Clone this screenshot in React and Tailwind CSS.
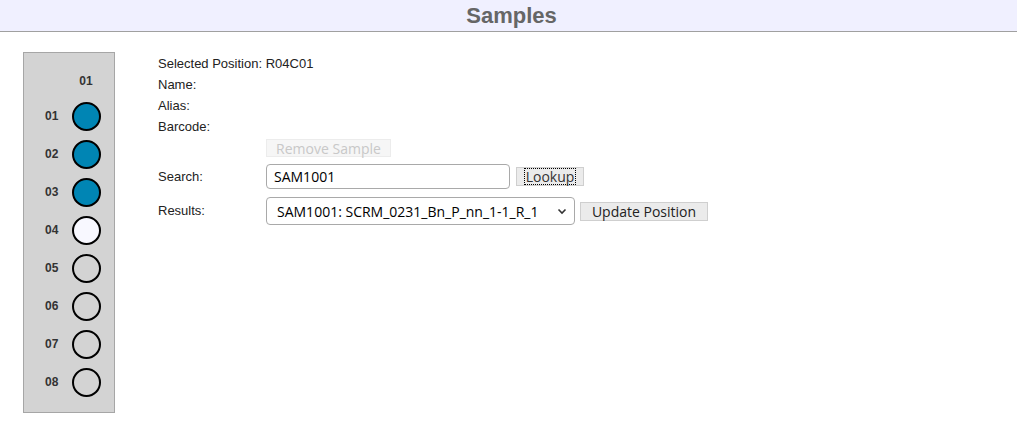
import React from 'react';

const wells = [
  { id: '01', state: 'filled' },
  { id: '02', state: 'filled' },
  { id: '03', state: 'filled' },
  { id: '04', state: 'selected' },
  { id: '05', state: 'empty' },
  { id: '06', state: 'empty' },
  { id: '07', state: 'empty' },
  { id: '08', state: 'empty' },
];

const wellColor = {
  filled: 'bg-[#0085b4]',
  selected: 'bg-[#f8f8ff]',
  empty: 'bg-transparent',
};

function Plate() {
  return (
    <div className="ml-[23px] mt-[20px] w-[92px] h-[361px] shrink-0 border border-[#a6a6a6] bg-[#d3d3d3] pt-[18px] font-['Liberation_Sans',sans-serif] text-[12px] font-bold text-[#333]">
      <div className="flex h-[20px] items-center">
        <span className="ml-[48px] w-[28px] text-center">01</span>
      </div>
      <div className="mt-[6px] flex flex-col">
        {wells.map((w) => (
          <div key={w.id} className="flex h-[38px] items-center">
            <span className="w-[48px] pl-[21px]">{w.id}</span>
            <span className={`h-[29px] w-[29px] rounded-full border-2 border-black ${wellColor[w.state]}`} />
          </div>
        ))}
      </div>
    </div>
  );
}

function Label({ children }) {
  return <span className="w-[108px] shrink-0">{children}</span>;
}

export default function App() {
  return (
    <div className="min-h-[423px] bg-white">
      <header className="flex h-[32px] items-center justify-center border-b border-[#a0a0a0] bg-[#f0f0ff]">
        <h1 className="ml-[6px] font-['Liberation_Sans',sans-serif] text-[22px] font-bold leading-none text-[#666]">
          Samples
        </h1>
      </header>

      <div className="flex">
        <Plate />

        <div className="ml-[43px] mt-[21px] flex flex-col font-['Liberation_Sans',sans-serif] text-[13px] text-[#222]">
          <div className="flex h-[21px] items-center">Selected Position: R04C01</div>
          <div className="flex h-[21px] items-center">Name:</div>
          <div className="flex h-[21px] items-center">Alias:</div>
          <div className="flex h-[21px] items-center">Barcode:</div>

          <div className="mt-[2px] flex h-[18px] items-center">
            <Label />
            <button
              type="button"
              disabled
              className="flex h-[18px] w-[125px] items-center justify-center border border-[#ececec] bg-[#f6f6f6] font-['Open_Sans',sans-serif] text-[14px] text-[#c8c8c8]"
            >
              Remove Sample
            </button>
          </div>

          <div className="mt-[7px] flex h-[25px] items-center">
            <Label>Search:</Label>
            <div className="flex h-[25px] w-[244px] items-center rounded-[4px] border border-[#a9a9a9] bg-white pl-[7px] font-['Open_Sans',sans-serif] text-[14px] text-black">
              SAM1001
            </div>
            <button
              type="button"
              className="ml-[6px] flex h-[19px] w-[68px] items-center justify-center border border-[#cfcfcf] bg-[#ebebeb] font-['Open_Sans',sans-serif] text-[14px] text-[#333]"
            >
              <span className="border border-dotted border-black px-[1px] leading-[15px]">Lookup</span>
            </button>
          </div>

          <div className="mt-[8px] flex h-[28px] items-center">
            <Label>Results:</Label>
            <div className="flex h-[28px] w-[309px] items-center justify-between whitespace-nowrap rounded-[4px] border border-[#a9a9a9] bg-white pl-[10px] pr-[6px] font-['Open_Sans',sans-serif] text-[14px] text-black">
              <span className="overflow-hidden">SAM1001: SCRM_0231_Bn_P_nn_1-1_R_1</span>
              <svg width="12" height="12" viewBox="0 0 12 12" className="ml-[6px] shrink-0">
                <path d="M2.5 4.5 L6 8 L9.5 4.5" fill="none" stroke="#333" strokeWidth="1.6" />
              </svg>
            </div>
            <button
              type="button"
              className="ml-[5px] flex h-[19px] w-[128px] items-center justify-center border border-[#cfcfcf] bg-[#ebebeb] font-['Open_Sans',sans-serif] text-[14px] text-[#222]"
            >
              Update Position
            </button>
          </div>
        </div>
      </div>
    </div>
  );
}
